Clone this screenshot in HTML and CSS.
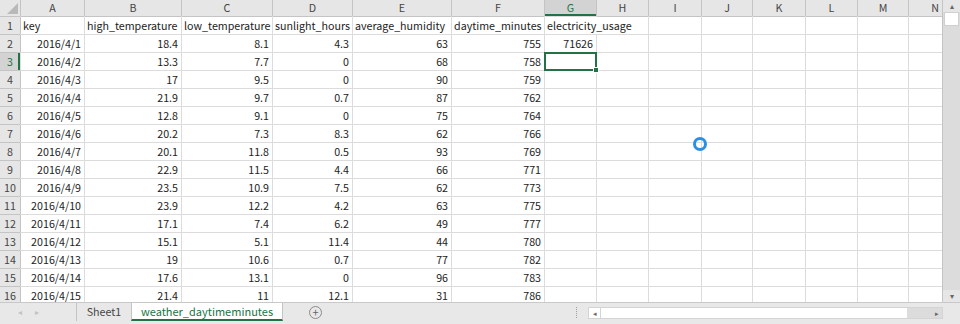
FILE: index.html
```html
<!DOCTYPE html>
<html lang="ja">
<head>
  <meta charset="UTF-8">
  <title>weather_daytimeminutes</title>
  <link rel="stylesheet" href="styles.css">
</head>
<body>
  <div class="window">
    <div class="main">
      <div class="sheet">
        <div class="grid" id="grid"></div>
        <div class="spinner"></div>
      </div>
      <div class="vscroll">
        <div class="vbtn">&#9652;</div>
        <div class="vthumb"></div>
        <div class="vtrack"></div>
        <div class="vbtn">&#9662;</div>
      </div>
    </div>
    <div class="tabbar">
      <div class="nav"><span>&#9666;</span><span>&#9656;</span></div>
      <div class="tab">Sheet1</div>
      <div class="tab active">weather_daytimeminutes</div>
      <div class="add">+</div>
      <div class="spacer"></div>
      <div class="dots"></div>
      <div class="hscroll">
        <div class="hbtn">&#9666;</div>
        <div class="htrack"></div>
        <div class="hthumb">&#9656;</div>
      </div>
      <div class="corner"></div>
    </div>
  </div>

  <script>
    const cols = ["A","B","C","D","E","F","G","H","I","J","K","L","M","N","O"];
    const heads = ["key","high_temperature","low_temperature","sunlight_hours","average_humidity","daytime_minutes","electricity_usage"];
    const rows = [
      ["2016/4/1","18.4","8.1","4.3","63","755","71626"],
      ["2016/4/2","13.3","7.7","0","68","758",""],
      ["2016/4/3","17","9.5","0","90","759",""],
      ["2016/4/4","21.9","9.7","0.7","87","762",""],
      ["2016/4/5","12.8","9.1","0","75","764",""],
      ["2016/4/6","20.2","7.3","8.3","62","766",""],
      ["2016/4/7","20.1","11.8","0.5","93","769",""],
      ["2016/4/8","22.9","11.5","4.4","66","771",""],
      ["2016/4/9","23.5","10.9","7.5","62","773",""],
      ["2016/4/10","23.9","12.2","4.2","63","775",""],
      ["2016/4/11","17.1","7.4","6.2","49","777",""],
      ["2016/4/12","15.1","5.1","11.4","44","780",""],
      ["2016/4/13","19","10.6","0.7","77","782",""],
      ["2016/4/14","17.6","13.1","0","96","783",""],
      ["2016/4/15","21.4","11","12.1","31","786",""]
    ];
    const grid = document.getElementById("grid");

    function cell(text, cls) {
      const d = document.createElement("div");
      d.className = "cell " + (cls || "");
      d.textContent = text;
      grid.appendChild(d);
      return d;
    }

    cell("", "corner-head");
    cols.slice(0, 14).forEach(c => cell(c, "col-head" + (c === "G" ? " sel" : "")));
    cell("", "col-head");

    // row 1: headers, electricity_usage spills into H
    cell("1", "row-head");
    heads.forEach((h, i) => {
      const d = cell(h, "");
      if (i === 6) d.classList.add("wide");
    });
    for (let i = 0; i < 7; i++) cell("", "");

    rows.forEach((r, n) => {
      const num = n + 2;
      cell(String(num), "row-head" + (num === 3 ? " sel" : ""));
      r.forEach((v, i) => cell(v, "num" + (num === 3 && i === 6 ? " active" : "")));
      for (let i = 0; i < 8; i++) cell("", "");
    });
  </script>
</body>
</html>
```

FILE: styles.css
```css
body {
  margin: 0;
  font-family: "Noto Sans CJK JP", "Noto Sans", sans-serif;
  font-size: 10.7px;
  color: #222;
  background: #fff;
  overflow: hidden;
}
.window {
  width: 960px;
  height: 324px;
  display: flex;
  flex-direction: column;
}
.main {
  display: flex;
  height: 303px;
  border-bottom: 1px solid #c8c8c8;
  box-sizing: border-box;
}
.sheet {
  position: relative;
  width: 943px;
  overflow: hidden;
}
.grid {
  display: grid;
  grid-template-columns: 20px 63px 96px 90px 79px 98px 92px 51px 51px 52px 50px 52px 51px 50px 52px 52px;
  grid-template-rows: 16px;
  grid-auto-rows: 17px;
  gap: 1px;
  background: #dcdcdc;
  width: max-content;
}
.cell {
  background: #fff;
  padding: 0 3px 0 2px;
  line-height: 17px;
  white-space: nowrap;
  overflow: hidden;
}
.cell.wide { grid-column: span 2; }
.num { text-align: right; }
.col-head, .corner-head {
  background: #e6e6e6;
  text-align: center;
  line-height: 16px;
  color: #444;
  padding: 0;
  box-shadow: 1px 0 0 #c4c4c4, 0 1px 0 #c4c4c4;
}
.corner-head { position: relative; }
.corner-head::after {
  content: "";
  position: absolute;
  right: 2px;
  bottom: 2px;
  border-style: solid;
  border-width: 0 0 11px 11px;
  border-color: transparent transparent #b9b9b9 transparent;
}
.col-head.sel {
  background: #d3d3d3;
  color: #217346;
  box-shadow: inset 0 -2px 0 #217346, 1px 0 0 #c4c4c4;
}
.row-head {
  background: #e6e6e6;
  text-align: center;
  color: #444;
  padding: 0;
  box-shadow: 1px 0 0 #c4c4c4, 0 1px 0 #c4c4c4;
}
.row-head.sel {
  background: #d3d3d3;
  color: #217346;
  box-shadow: inset -2px 0 0 #217346, 0 1px 0 #c4c4c4;
}
.cell.active {
  position: relative;
  overflow: visible;
  outline: 2px solid #217346;
  outline-offset: -1px;
  z-index: 2;
}
.cell.active::after {
  content: "";
  position: absolute;
  right: -3px;
  bottom: -3px;
  width: 4px;
  height: 4px;
  background: #217346;
  border: 1px solid #fff;
}
.spinner {
  position: absolute;
  left: 693px;
  top: 137px;
  width: 8px;
  height: 8px;
  border: 3px solid #2b8fe3;
  border-radius: 50%;
}
.vscroll {
  width: 17px;
  background: #dcdcdc;
  border-left: 1px solid #c4c4c4;
  display: flex;
  flex-direction: column;
}
.vbtn {
  height: 12px;
  background: #e6e6e6;
  color: #666;
  font-size: 8px;
  line-height: 12px;
  text-align: center;
}
.vthumb {
  height: 12px;
  margin: 0 1px;
  background: #fff;
  border: 1px solid #d0d0d0;
}
.vtrack { flex: 1; }
.tabbar {
  height: 21px;
  background: #e8e8e8;
  display: flex;
  color: #444;
}
.nav {
  width: 76px;
  display: flex;
  gap: 13px;
  padding-left: 18px;
  box-sizing: border-box;
  color: #c2c2c2;
  font-size: 8px;
  line-height: 18px;
}
.tab {
  width: 55px;
  margin-bottom: 3px;
  border-left: 1px solid #c4c4c4;
  text-align: center;
  line-height: 18px;
  box-sizing: border-box;
}
.tab.active {
  width: 152px;
  background: #fff;
  color: #217346;
  border-right: 1px solid #c4c4c4;
  border-bottom: 2px solid #217346;
  line-height: 16px;
  font-size: 11px;
}
.add {
  width: 11px;
  height: 11px;
  margin: 3px 0 0 26px;
  border: 1px solid #8a8a8a;
  border-radius: 50%;
  color: #666;
  font-size: 11px;
  line-height: 10px;
  text-align: center;
}
.spacer { flex: 1; }
.dots {
  width: 0;
  height: 11px;
  margin: 4px 11px 0 0;
  border-left: 1px dotted #a0a0a0;
}
.hscroll {
  width: 355px;
  height: 12px;
  margin-top: 4px;
  display: flex;
  background: #fff;
  border: 1px solid #d4d4d4;
  box-sizing: border-box;
}
.hbtn {
  width: 11px;
  border-right: 1px solid #d4d4d4;
  color: #666;
  font-size: 7px;
  line-height: 10px;
  text-align: center;
}
.htrack { flex: 1; }
.hthumb {
  width: 35px;
  background: #dcdcdc;
  color: #666;
  font-size: 7px;
  line-height: 10px;
  text-align: right;
  padding-right: 3px;
  box-sizing: border-box;
}
.corner { width: 17px; }
```
